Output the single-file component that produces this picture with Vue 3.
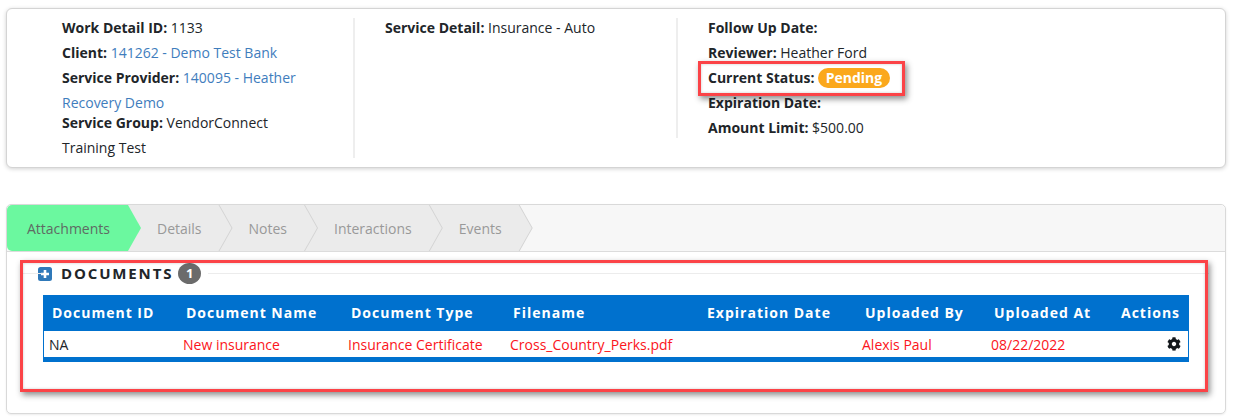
<script setup>
const cols = [134, 165, 162, 194, 158, 129, 127, 75]
const headers = ['Document ID', 'Document Name', 'Document Type', 'Filename', 'Expiration Date', 'Uploaded By', 'Uploaded At', 'Actions']
const tabs = ['Attachments', 'Details', 'Notes', 'Interactions', 'Events']
</script>

<template>
  <div class="page">
    <section class="summary">
      <div class="col col-a">
        <div class="lines">
          <div><b>Work Detail ID:</b> 1133</div>
          <div><b>Client:</b> <a>141262 - Demo Test Bank</a></div>
          <div class="tight"><b>Service Provider:</b> <a>140095 - Heather Recovery Demo</a></div>
          <div><b>Service Group:</b> VendorConnect Training Test</div>
        </div>
      </div>
      <div class="col col-b">
        <div class="lines">
          <div><b>Service Detail:</b> Insurance - Auto</div>
        </div>
      </div>
      <div class="col col-c">
        <div class="lines">
          <div><b>Follow Up Date:</b></div>
          <div><b>Reviewer:</b> Heather Ford</div>
          <div class="status-row"><b>Current Status:</b> <span class="pill">Pending</span></div>
          <div><b>Expiration Date:</b></div>
          <div><b>Amount Limit:</b> $500.00</div>
        </div>
      </div>
    </section>

    <section class="panel">
      <nav class="tabs">
        <div v-for="(t, i) in tabs" :key="t" class="tab" :class="{ active: i === 0 }" :style="{ zIndex: 10 - i }">
          <span>{{ t }}</span>
        </div>
      </nav>
      <div class="panel-body">
        <div class="legend">
          <span class="rule rule-left"></span>
          <svg class="plus" viewBox="0 0 14 14" width="14" height="14">
            <rect width="14" height="14" rx="2.5" fill="#2f79b9" />
            <path d="M7 3v8M3 7h8" stroke="#fff" stroke-width="2.6" />
          </svg>
          <span class="legend-title">DOCUMENTS</span>
          <span class="count">1</span>
          <span class="rule rule-right"></span>
        </div>
        <table class="docs">
          <colgroup>
            <col v-for="(w, i) in cols" :key="i" :style="{ width: w + 'px' }" />
          </colgroup>
          <thead>
            <tr><th v-for="h in headers" :key="h">{{ h }}</th></tr>
          </thead>
          <tbody>
            <tr>
              <td class="plain">NA</td>
              <td>New insurance</td>
              <td>Insurance Certificate</td>
              <td>Cross_Country_Perks.pdf</td>
              <td></td>
              <td>Alexis Paul</td>
              <td>08/22/2022</td>
              <td class="act">
                <svg viewBox="0 0 512 512" width="14" height="14">
                  <path fill="#14181c" d="M487.4 315.7l-42.6-24.6c4.3-23.2 4.3-47 0-70.2l42.6-24.6c4.9-2.8 7.1-8.6 5.5-14-11.1-35.6-30-67.8-54.7-94.6-3.8-4.1-10-5.1-14.8-2.3L380.8 110c-17.9-15.4-38.5-27.3-60.8-35.1V25.8c0-5.6-3.9-10.5-9.4-11.7-36.7-8.2-74.3-7.8-109.2 0-5.5 1.2-9.4 6.1-9.4 11.7V75c-22.2 7.9-42.8 19.8-60.8 35.1L88.7 85.5c-4.9-2.8-11-1.9-14.8 2.3-24.7 26.7-43.6 58.9-54.7 94.6-1.7 5.4.6 11.2 5.5 14L67.3 221c-4.3 23.2-4.3 47 0 70.2l-42.6 24.6c-4.9 2.8-7.1 8.6-5.5 14 11.1 35.6 30 67.8 54.7 94.6 3.8 4.1 10 5.1 14.8 2.3l42.6-24.6c17.9 15.4 38.5 27.3 60.8 35.1v49.2c0 5.6 3.9 10.5 9.4 11.7 36.7 8.2 74.3 7.8 109.2 0 5.5-1.2 9.4-6.1 9.4-11.7v-49.2c22.2-7.9 42.8-19.8 60.8-35.1l42.6 24.6c4.9 2.8 11 1.9 14.8-2.3 24.7-26.7 43.6-58.9 54.7-94.6 1.5-5.5-.7-11.3-5.6-14.1zM256 336c-44.1 0-80-35.9-80-80s35.9-80 80-80 80 35.9 80 80-35.9 80-80 80z" />
                </svg>
              </td>
            </tr>
          </tbody>
        </table>
      </div>
    </section>

    <div class="mark mark-status"></div>
    <div class="mark mark-docs"></div>
  </div>
</template>

<style scoped>
.page {
  position: relative;
  box-sizing: border-box;
  width: 1233px;
  height: 420px;
  overflow: hidden;
  padding: 8px 7px 0 6px;
  background: #fff;
  font-family: "Open Sans", "Liberation Sans", sans-serif;
  font-size: 14px;
  color: #212529;
}
.summary {
  display: flex;
  align-items: flex-start;
  box-sizing: border-box;
  height: 160px;
  padding: 9px 0 0;
  border: 1px solid #d4d4d4;
  border-radius: 6px;
  box-shadow: 0 1px 4px rgba(0, 0, 0, 0.18);
  background: #fff;
}
.col { box-sizing: border-box; }
.col-a {
  width: 348px;
  padding: 0 40px 0 55px;
  border-right: 2px solid #eee;
}
.col-b {
  width: 323px;
  height: 120px;
  padding-left: 30px;
  border-right: 2px solid #eee;
}
.col-c { padding-left: 30px; }
.lines {
  margin: -3px 0 -2px;
  line-height: 25px;
}
.tight { margin-bottom: -5px; }
.status-row { height: 25px; }
b { font-weight: 700; }
a { color: #3f7dbd; }
.pill {
  display: inline-block;
  height: 20px;
  padding: 0 7.5px;
  border-radius: 10px;
  background: #fba81c;
  color: #fff;
  font-weight: 700;
  line-height: 20px;
}
.panel {
  box-sizing: border-box;
  height: 210px;
  margin-top: 36px;
  border: 1px solid #d9d9d9;
  border-radius: 5px;
  box-shadow: 0 1px 2px rgba(0, 0, 0, 0.08);
}
.tabs {
  display: flex;
  height: 47px;
  box-sizing: border-box;
  border-bottom: 1px solid #dcdcdc;
  background: #f7f7f7;
  border-radius: 5px 5px 0 0;
}
.tab {
  position: relative;
  display: flex;
  align-items: center;
  padding: 0 31px 0 29px;
  margin-left: -13px;
  color: #999;
  background: #d3d3d3;
  clip-path: polygon(0 0, calc(100% - 13px) 0, 100% 50%, calc(100% - 13px) 100%, 0 100%);
}
.tab::before {
  content: "";
  position: absolute;
  inset: 0 1px 0 -1px;
  background: #ebebeb;
  clip-path: polygon(0 0, calc(100% - 13px) 0, 100% 50%, calc(100% - 13px) 100%, 0 100%);
}
.tab span { position: relative; }
.tab.active {
  margin-left: 0;
  padding-left: 20px;
  padding-right: 31px;
  color: #5f6b64;
  background: #6bf89f;
  border-radius: 5px 0 0 5px;
}
.tab.active::before { display: none; }
.panel-body { padding: 11px 36px 0; }
.legend {
  position: relative;
  display: flex;
  align-items: center;
  height: 21px;
  margin: 0 0 11px;
}
.rule {
  position: absolute;
  top: 10px;
  height: 1px;
  background: #ececec;
}
.rule-left { left: -21px; width: 21px; }
.rule-right { left: 165px; right: -20px; }
.plus { margin: 0 9px 0 -5px; flex: none; }
.legend-title {
  font-size: 15px;
  font-weight: 700;
  letter-spacing: 1.85px;
  color: #212529;
  line-height: 21px;
}
.count {
  width: 23px;
  height: 21px;
  margin-left: 5px;
  border-radius: 50%;
  background: #6b6b6b;
  color: #fff;
  font-size: 13px;
  font-weight: 700;
  line-height: 21px;
  text-align: center;
}
.docs {
  width: 1146px;
  table-layout: fixed;
  border-collapse: separate;
  border-spacing: 0;
  border: solid #0071ce;
  border-width: 0 1px 5px;
}
.docs th {
  height: 36px;
  padding: 0 0 2px 8px;
  box-sizing: border-box;
  background: #0071ce;
  color: #fff;
  font-weight: 700;
  letter-spacing: 1px;
  text-align: left;
  white-space: nowrap;
}
.docs td {
  height: 26px;
  padding: 0 0 0 5px;
  color: #fb1420;
  white-space: nowrap;
}
.docs td.plain { color: #212529; }
.docs td.act { padding: 0 7px 0 0; }
.act svg { display: block; margin-left: auto; }
.mark {
  position: absolute;
  box-sizing: border-box;
  border: 3px solid #fb4347;
  box-shadow: 2px 3px 6px rgba(0, 0, 0, 0.45), inset 0 0 3px rgba(0, 0, 0, 0.2);
  pointer-events: none;
}
.mark-status { left: 698px; top: 61px; width: 207px; height: 35px; }
.mark-docs { left: 20px; top: 260px; width: 1188px; height: 132px; }
</style>
